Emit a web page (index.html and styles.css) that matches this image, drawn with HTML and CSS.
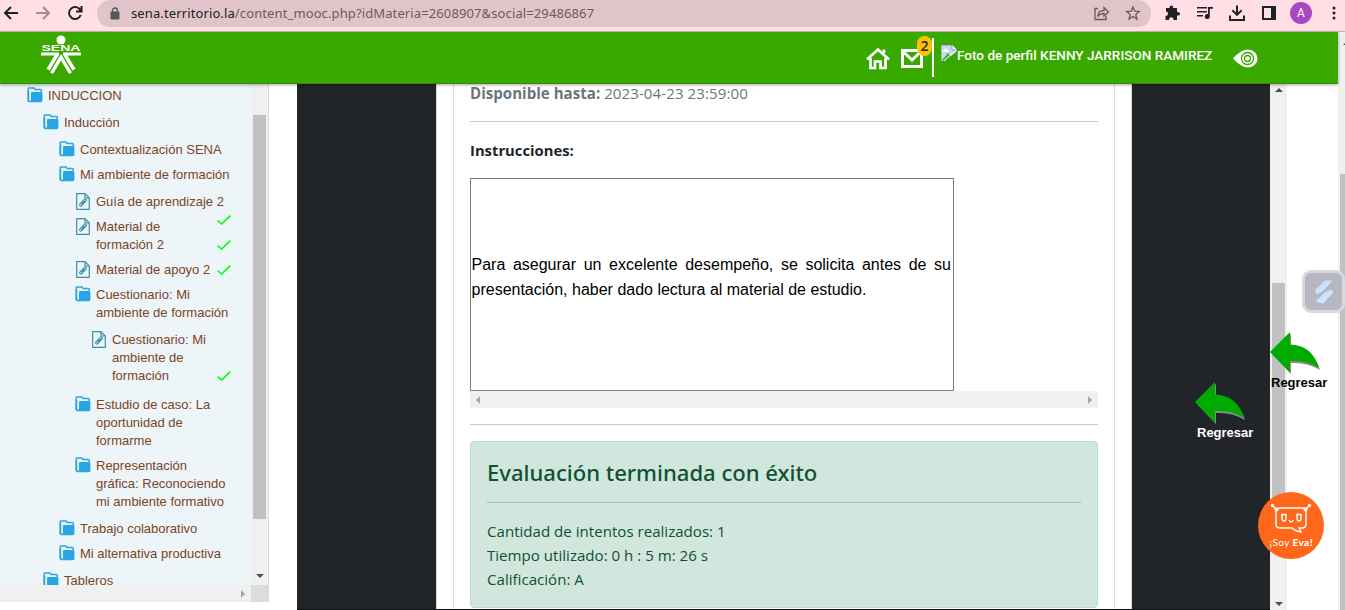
FILE: index.html
```html
<!DOCTYPE html>
<html lang="es">
<head>
<meta charset="utf-8">
<title>SENA Territorio</title>
<link rel="stylesheet" href="styles.css">
</head>
<body>
<svg class="defs" width="0" height="0">
  <symbol id="folder" viewBox="0 0 16 16"><path d="M1.2 14.2V1.8Q1.2 1 2 1H7L8.2 2.6H13.4Q14.3 2.6 14.3 3.5V5" fill="none" stroke="#29a5e1" stroke-width="1.5"/><path d="M.7 13.5Q.7 15.3 2.5 15.3H13.6Q15.4 15.3 15.4 13.6V6.3Q15.4 5 14.3 5H5Q4 5 4 6V13.5H2.3V4H.7Z" fill="#29a5e1"/></symbol>
  <symbol id="doc" viewBox="0 0 14 17"><path d="M.7.7H9L13.3 5V16.3H.7Z M9 .7V5H13.3" fill="none" stroke="#3d8fa3" stroke-width="1.2"/><path d="M4 12.5L3.6 11.3L8.6 6.2Q10 5.5 10.4 7Q10.400 7.600 10 8L5.500 12.800Q4.600 13.400 4 12.500M5.500 11.300L8.600 8" fill="none" stroke="#3d8fa3" stroke-width="1.200"/></symbol>
  <symbol id="check" viewBox="0 0 14 10"><path d="M.6 5.600L4.600 9L13.400.7" fill="none" stroke="#0f1" stroke-width="1.600"/></symbol>
  <symbol id="arrow" viewBox="0 0 51 42"><path d="M21 2V14Q43 15 50 38Q37 30 21 31V42L2 22Z" fill="#8b8b8b"/><path d="M20 0V12.500Q42 13 49 36Q37 28 20 29V40.500L0 20Z" fill="#00ab00"/></symbol>
</svg>

<header class="browser">
  <svg class="nav" width="90" height="27" viewBox="0 0 90 27" fill="none" stroke-width="2"><g stroke="#202124"><path d="M18 13H5M11 7L5 13L11 19"/><path d="M80.500 10.500A6 6 0 1 0 80.700 15M81.500 6V11.500H76"/></g><path d="M36 13H49M43 7L49 13L43 19" stroke="#a28e92"/></svg>
  <div class="omnibox">
    <svg width="10" height="13" viewBox="0 0 10 13"><rect x=".5" y="4.500" width="9" height="8" rx="1" fill="#54585c"/><path d="M2.500 5V3.500A2.500 2.500 0 0 1 7.500 3.500V5" fill="none" stroke="#54585c" stroke-width="1.400"/></svg>
    <span class="url"><b>sena.territorio.la</b>/content_mooc.php?idMateria=2608907&amp;social=29486867</span>
    <svg class="share" width="48" height="16" viewBox="0 0 48 16" fill="none" stroke="#67595d" stroke-width="1.300"><path d="M4 3.500H1V14.500H12V11M4 11Q4 5.500 10 5.500V2.500L14.500 7L10 11V8.500Q6 8.500 4 11Z"/><path d="M39 2L40.700 6.100L45.300 6.500L41.800 9.400L42.900 14L39 11.500L35.100 14L36.200 9.400L32.700 6.500L37.300 6.100Z"/></svg>
  </div>
  <svg class="tools" width="139" height="27" viewBox="0 0 139 27"><g fill="#202124"><path d="M15 8H18.500Q18.300 5.500 20.300 5.500Q22.400 5.500 22 8H26V12Q29 11.500 29 13.700Q29 16 26 15.500V20H22.500Q22.500 17.300 20.300 17.300Q18 17.300 18 20H14.500V16Q17 16 17 13.700Q17 11.500 15 11.500Z"/><path d="M46 7h10v1.600H46zM46 11h10v1.600H46zM46 15h6v1.600h-6zM57 7h5v1.800h-3.200V16.500a2.500 2.500 0 1 1-1.800-2.400z"/><path d="M85 5.500h2v7l3-3 1.300 1.400L86 16.200 80.700 10.900 82 9.500l3 3zM78 15.500h2V19h12v-3.500h2V21H78z"/><path d="M111 6H125V20H111ZM113 8V18H120V8Z" fill-rule="evenodd"/></g></svg>
  <span class="avatar">A</span>
  <svg class="dots" width="4" height="16" viewBox="0 0 4 16" fill="#202124"><circle cx="2" cy="3" r="1.500"/><circle cx="2" cy="8" r="1.500"/><circle cx="2" cy="13" r="1.500"/></svg>
</header>

<div class="window">
  <div class="site">
    <nav class="topbar">
      <svg class="logo" width="40" height="40" viewBox="0 0 40 40" fill="#fff"><circle cx="20" cy="5" r="4.500"/><text x=".5" y="16" font-family="Liberation Sans" font-size="9" font-weight="bold" textLength="39" lengthAdjust="spacingAndGlyphs">SENA</text><path d="M0 17.500H18V20L8.500 35.500 5.500 33.800 13.500 20.500H0ZM40 17.500H22V20L31.500 35.500 34.500 33.800 26.500 20.500H40ZM20 19L31 37.500 28 39 20 25.500 12 39 9 37.500Z"/></svg>
      <svg class="home" width="26" height="23" viewBox="0 0 26 23"><path d="M2 12.500L13 2.500L24 12.500M5.500 11V21H10V14.500H15.500V21H20.500V11M19 6V2.500" fill="none" stroke="#fff" stroke-width="2.700"/></svg>
      <div class="mail"><svg width="22" height="19" viewBox="0 0 22 19"><path d="M1.500 1.500H20.500V17.500H1.500ZM1.500 2L11 11L20.500 2" fill="none" stroke="#fff" stroke-width="3"/></svg><span class="badge">2</span></div>
      <i class="divider"></i>
      <svg class="broken" width="16" height="16" viewBox="0 0 16 16"><path d="M.5.500H11L15.500 5V15.500H.5Z" fill="#c4d9f5" stroke="#b5b5b5"/><path d="M11 0V5H16" fill="#fff" stroke="#999"/><path d="M2 6Q3 3 5 4Q8 4 7.500 7H2Z" fill="#fff"/><path d="M1 15L7 8L13 15Z" fill="#4da83c"/><path d="M4 16L16 6V16Z" fill="#39a900"/><path d="M3 15.500L15.500 5.500" stroke="#fff"/></svg>
      <span class="user">Foto de perfil KENNY JARRISON RAMIREZ</span>
      <svg class="eye" width="25" height="19" viewBox="0 0 25 19"><path d="M0 9.500Q8 .5 15 .5A9.500 9 0 0 1 15 18.500Q8 18.500 0 9.500Z" fill="#fff"/><g fill="none" stroke="#39a900" stroke-width="1.300"><circle cx="14.500" cy="9.500" r="6"/><circle cx="14.500" cy="9.500" r="3"/></g></svg>
    </nav>

    <div class="columns">
      <aside class="sidebar">
        <div class="treewrap">
          <div class="tree">
            <div class="row"><svg class="f"><use href="#folder"/></svg>INDUCCION</div>
            <div class="nest">
              <div class="row"><svg class="f"><use href="#folder"/></svg>Inducción</div>
              <div class="nest">
                <div class="row"><svg class="f"><use href="#folder"/></svg>Contextualización SENA</div>
                <div class="row"><svg class="f"><use href="#folder"/></svg>Mi ambiente de formación</div>
                <div class="nest">
                  <div class="row"><svg class="d"><use href="#doc"/></svg>Guía de aprendizaje 2<svg class="check low"><use href="#check"/></svg></div>
                  <div class="row"><svg class="d"><use href="#doc"/></svg>Material de<br>formación 2<svg class="check low"><use href="#check"/></svg></div>
                  <div class="row"><svg class="d"><use href="#doc"/></svg>Material de apoyo 2<svg class="check"><use href="#check"/></svg></div>
                  <div class="row"><svg class="f"><use href="#folder"/></svg>Cuestionario: Mi<br>ambiente de formación</div>
                  <div class="nest leaf">
                    <div class="row"><svg class="d"><use href="#doc"/></svg>Cuestionario: Mi<br>ambiente de<br>formación<svg class="check third"><use href="#check"/></svg></div>
                  </div>
                  <div class="row"><svg class="f"><use href="#folder"/></svg>Estudio de caso: La<br>oportunidad de<br>formarme</div>
                  <div class="row"><svg class="f"><use href="#folder"/></svg>Representación<br>gráfica: Reconociendo<br>mi ambiente formativo</div>
                </div>
                <div class="row"><svg class="f"><use href="#folder"/></svg>Trabajo colaborativo</div>
                <div class="row"><svg class="f"><use href="#folder"/></svg>Mi alternativa productiva</div>
              </div>
              <div class="row"><svg class="f"><use href="#folder"/></svg>Tableros</div>
            </div>
          </div>
          <div class="vbar side"><i class="thumb"></i><i class="tri down"></i></div>
        </div>
        <div class="sidefoot"><i class="tri right"></i><i class="corner"></i></div>
      </aside>

      <main class="stage">
        <div class="page">
          <section class="card">
            <p class="until"><b>Disponible hasta:</b> <span>2023-04-23 23:59:00</span></p>
            <hr>
            <p class="inst">Instrucciones:</p>
            <div class="cell"><p>Para asegurar un excelente desempeño, se solicita antes de su presentación, haber dado lectura al material de estudio.</p></div>
            <div class="hbar"><i class="tri left"></i><i class="tri right"></i></div>
            <hr>
            <div class="alert">
              <h4>Evaluación terminada con éxito</h4>
              <hr>
              <p>Cantidad de intentos realizados: 1</p>
              <p>Tiempo utilizado: 0 h : 5 m: 26 s</p>
              <p>Calificación: A</p>
            </div>
          </section>
        </div>
      </main>
      <div class="vbar inner"><i class="tri up"></i><i class="thumb"></i><i class="tri down"></i></div>
    </div>
  </div>
  <div class="outerbar"><i class="tri up"></i><i class="thumb"></i></div>
</div>

<div class="back white"><svg width="51" height="42"><use href="#arrow"/></svg><span>Regresar</span></div>
<div class="back black"><svg width="51" height="42"><use href="#arrow"/></svg><span>Regresar</span></div>
<div class="widget"><svg width="18" height="24" viewBox="0 0 18 24"><defs><linearGradient id="g" x2="1" y2="1"><stop stop-color="#b5d7fa"/><stop offset="1" stop-color="#e3f0ff"/></linearGradient></defs><path d="M10 .5H17.500L8 11L2 14Q-.5 12 1 9Z" fill="url(#g)"/><path d="M17.500 9.500Q18.500 12 17 14L8 23.500L.5 21.500L10 12Z" fill="url(#g)"/></svg></div>
<div class="eva"><svg width="66" height="66" viewBox="0 0 66 66"><g fill="none" stroke="#fff" stroke-width="1.400"><path d="M22 16H45Q48 16 48 19V32Q48 36 44 36H41L43 40Q37 39 34 36H22Q18 36 18 32V19Q18 16 22 16Z"/><path d="M14 13L18 17M52 13L48 17M23 22.500H28.500M24 22V26Q24 29 26 29Q28 29 28 26V22M38.500 22.500H44M39 22V26Q39 29 41 29Q43 29 43 26V22M31 28Q33 32 35.500 28"/></g><g fill="#fff"><circle cx="14.500" cy="13.500" r="1.700"/><circle cx="51.500" cy="13.500" r="1.700"/><circle cx="18.500" cy="17.500" r="2"/><circle cx="47.500" cy="17.500" r="2"/></g><text x="11.500" y="53.500" fill="#fff" font-family="Lato" font-size="10" textLength="43">¡Soy <tspan font-weight="900">Eva!</tspan></text></svg></div>
</body>
</html>
```
FILE: styles.css
```css
* { box-sizing: border-box; }
body { margin: 0; height: 610px; overflow: hidden; display: flex; flex-direction: column; background: #fff; font-family: "Liberation Sans", sans-serif; }
.defs { position: absolute; }
p, h4, hr { margin: 0; }
svg { display: block; flex: none; }

/* browser chrome */
.browser { flex: none; height: 32px; display: flex; align-items: flex-start; background: #ffdfe5; border-bottom: 1px solid #cbb2b6; }
.nav { margin-right: 7px; }
.omnibox { width: 1054px; height: 27px; flex: none; display: flex; align-items: center; padding: 0 9px 0 13px; background: #e1c4c9; border-radius: 13px; }
.url { margin-left: 11px; margin-top: -1px; font: 13px "Noto Sans", sans-serif; color: #6b5c60; white-space: nowrap; letter-spacing: .115px; }
.url b { font-weight: 400; color: #202124; }
.share { margin-left: auto; margin-top: -1px; }
.avatar { width: 22px; height: 22px; margin-top: 2px; border-radius: 50%; background: #ab47bc; color: #fff; font: 12px/22px Roboto, sans-serif; text-align: center; }
.dots { margin: 5px 0 0 20px; }

.window { flex: 1; min-height: 0; display: flex; }
.site { width: 1338px; display: flex; flex-direction: column; }
.topbar { position: relative; z-index: 2; flex: none; height: 52px; display: flex; align-items: flex-start; background: #39a900; border-bottom: 1px solid #2f9100; box-shadow: 0 1px 3px rgba(0,0,0,.35); }
.logo { margin: 3px 0 0 41px; }
.home { margin: 15px 0 0 784px; }
.mail { position: relative; margin: 17px 0 0 10px; }
.badge { position: absolute; left: 16px; top: -13px; width: 15px; height: 20px; border-radius: 8px; background: #ffc107; color: #212529; font: 600 14px/19px "Open Sans", sans-serif; text-align: center; }
.divider { width: 2px; height: 39px; margin: 6px 0 0 9px; background: #fff; }
.broken { margin: 13px 0 0 7px; }
.user { width: 257px; margin: 14px 0 0; color: #fff; font: 500 13.550px/18px Roboto, sans-serif; white-space: nowrap; }
.eye { margin: 17px 0 0 19px; }

.columns { flex: 1; min-height: 0; display: flex; }
.sidebar { width: 269px; flex: none; height: 518px; border-right: 1px solid #d9d9d9; }
.treewrap { height: 501px; display: flex; overflow: hidden; }
.tree { width: 251px; padding: 3px 0 0 27px; background: #edf5f9; color: #7b4425; font-size: 13px; line-height: 18px; }
.nest { padding: 2px 0 2px 16px; }
.leaf { padding-bottom: 4px; }
.row { position: relative; padding-left: 21px; margin-bottom: 7px; white-space: nowrap; }
.f { position: absolute; left: 0; top: 0; width: 16px; height: 16px; }
.d { position: absolute; left: 1px; top: 0; width: 14px; height: 17px; }
.check { position: absolute; right: 20px; top: 4px; width: 14px; height: 10px; }
.low { top: 22px; }
.third { top: 40px; }
.vbar { display: flex; flex-direction: column; align-items: center; width: 17px; flex: none; background: #f0f0f0; }
.thumb { width: 13px; background: #c1c1c1; }
.side .thumb { height: 404px; margin-top: 31px; }
.side .down { margin-top: 55px; }
.tri { width: 0; height: 0; border: 4px solid transparent; }
.up { border-top: 0; border-bottom-color: #505050; }
.down { border-bottom: 0; border-top-color: #505050; }
.left { border-left: 0; border-right-color: #a3a3a3; }
.right { border-right: 0; border-left-color: #a3a3a3; }
.sidefoot { height: 17px; display: flex; align-items: center; background: #f0f0f0; }
.sidefoot .right { margin-left: 241px; }
.corner { margin-left: auto; width: 17px; height: 17px; background: #dcdcdc; }

.stage { width: 973px; margin-left: 28px; flex: none; padding: 0 138px 0 139px; background: #212529; border-bottom: 1px solid #111417; }
.page { height: 100%; padding: 0 16px; background: #fff; border: solid #d7d8d9; border-width: 0 1px; }
.card { height: 100%; overflow: hidden; border: solid #dedede; border-width: 0 1px; padding: 0 16px; font: 15.100px/24px "Open Sans", sans-serif; color: #212529; }
.until { margin: -3px 0 16px; color: #6c757d; white-space: nowrap; }
.until span { letter-spacing: .07px; }
.card hr { height: 1px; border: 0; background: #c7c8c9; }
.inst { margin: 16px 0; font-weight: 700; font-size: 14.800px; }
.cell { width: 484px; height: 213px; padding: 0 2px 0 1px; border: 1px solid gray; display: flex; align-items: center; }
.cell p { font: 16px/25px "Liberation Sans", sans-serif; color: #000; text-align: justify; margin: -15px 0 0 -.5px; }
.hbar { height: 17px; display: flex; align-items: center; justify-content: space-between; padding: 0 6px; margin-bottom: 16px; background: #f0f0f0; }
.alert { height: 167px; margin-top: 16px; padding: 16px; border: 1px solid #badbcc; border-radius: 4px; background: #d1e7dd; color: #0f5132; white-space: nowrap; }
.alert h4 { font: 500 22.050px/29px "Noto Sans", sans-serif; height: 44px; }
.alert hr { background: #9dc3b1; margin-bottom: 16px; }

.inner .up { margin-top: 4px; }
.inner .thumb { height: 240px; margin-top: 191px; }
.inner .down { margin-top: 79px; }
.outerbar { flex: 1; background: #f0f0f0; overflow: hidden; }
.outerbar .up { display: block; margin: 9px 0 0 5px; }
.outerbar .thumb { display: block; margin: 129px 0 0 2px; height: 440px; }

/* floating controls */
.back { position: absolute; display: flex; flex-direction: column; font: bold 13px/15px "Liberation Sans", sans-serif; }
.back span { margin: 1px 0 0 1px; }
.white { left: 1195px; top: 382px; color: #fff; }
.white span { margin-left: 2px; }
.black { left: 1270px; top: 332px; color: #000; }
.widget { position: absolute; left: 1302px; top: 270px; width: 43px; height: 43px; border: 3px solid #d8d9de; border-radius: 9px; background: #b6b7bf; display: flex; align-items: center; justify-content: center; }
.eva { position: absolute; left: 1258px; top: 492px; width: 66px; height: 67px; border-radius: 50%; background: #ff671b; }
```
